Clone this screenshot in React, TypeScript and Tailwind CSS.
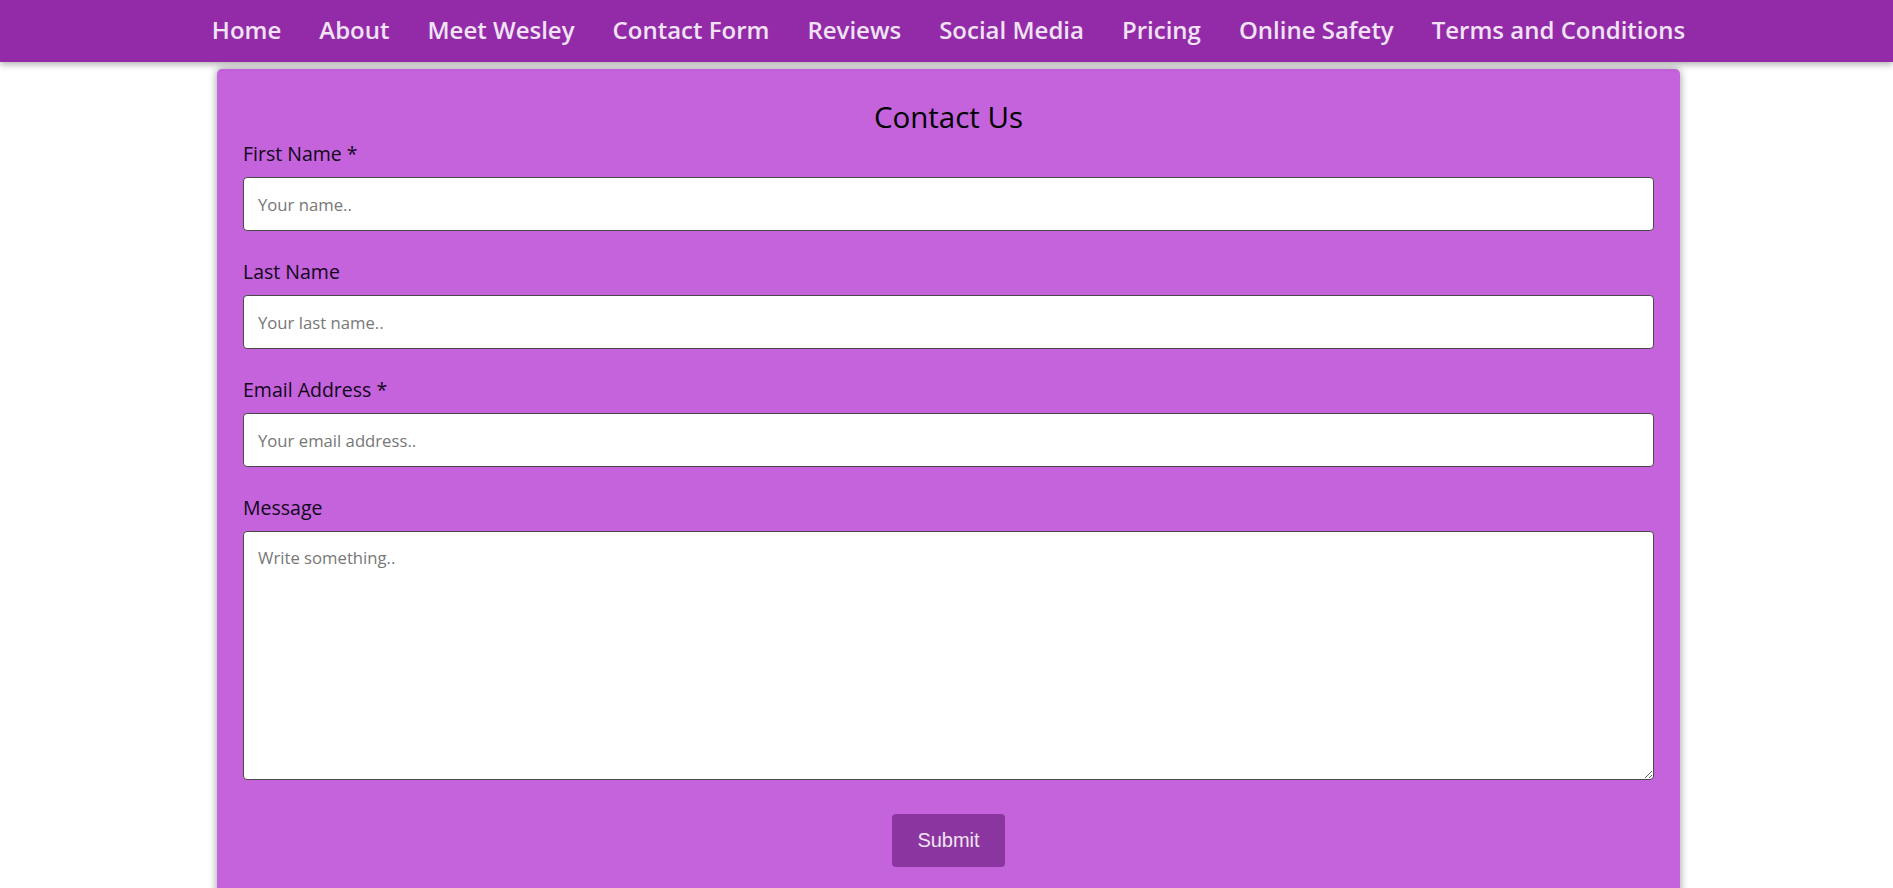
import React from "react";

const links = [
  "Home",
  "About",
  "Meet Wesley",
  "Contact Form",
  "Reviews",
  "Social Media",
  "Pricing",
  "Online Safety",
  "Terms and Conditions",
];

const fields = [
  { id: "fname", label: "First Name *", placeholder: "Your name..", type: "text" },
  { id: "lname", label: "Last Name", placeholder: "Your last name..", type: "text" },
  { id: "email", label: "Email Address *", placeholder: "Your email address..", type: "email" },
];

function NavBar() {
  return (
    <nav className="relative z-10 h-[62px] bg-[#932ba8] shadow-[0_2px_7px_rgba(0,0,0,0.35)]">
      <ul className="flex h-full items-center justify-center gap-[38px] pb-[3px] pl-[4px]">
        {links.map((link) => (
          <li key={link}>
            <a href="#" className="text-[24px] font-semibold leading-[33px] text-[#f1e3f5]">
              {link}
            </a>
          </li>
        ))}
      </ul>
    </nav>
  );
}

function ContactForm() {
  return (
    <div className="pl-[4px]">
      <section className="mx-auto mt-[7px] w-[1463px] rounded-[5px] bg-[#c463dc] px-[26px] pb-[40px] pt-[28px] shadow-[0_0_8px_rgba(0,0,0,0.4)]">
        <h1 className="mb-[3px] text-center text-[29.5px] leading-[40px] text-black">Contact Us</h1>
        <form onSubmit={(e) => e.preventDefault()}>
          {fields.map((field) => (
            <div key={field.id} className="mb-[27px]">
              <label htmlFor={field.id} className="block text-[19.5px] leading-[27px] text-[#12061a]">
                {field.label}
              </label>
              <input
                id={field.id}
                type={field.type}
                placeholder={field.placeholder}
                className="mt-[10px] block h-[54px] w-full rounded-[4px] border border-[#4a4a4a] bg-white px-[14px] text-[16.7px] text-black outline-none placeholder:text-[#777]"
              />
            </div>
          ))}
          <div>
            <label htmlFor="message" className="block text-[19.5px] leading-[27px] text-[#12061a]">
              Message
            </label>
            <textarea
              id="message"
              placeholder="Write something.."
              className="mt-[10px] block h-[249px] w-full rounded-[4px] border border-[#4a4a4a] bg-white px-[14px] py-[13px] text-[16.7px] text-black outline-none placeholder:text-[#777]"
            />
          </div>
          <div className="mt-[34px] flex justify-center">
            <button
              type="submit"
              className="rounded-[4px] bg-[#8b36a0] px-[25px] py-[15px] text-[20px] leading-[23px] text-[#f0e4f4] [font-family:'Liberation_Sans',Arial,sans-serif]"
            >
              Submit
            </button>
          </div>
        </form>
      </section>
    </div>
  );
}

export default function App() {
  return (
    <div className="min-h-screen bg-white [font-family:'Open_Sans',sans-serif]">
      <NavBar />
      <ContactForm />
    </div>
  );
}
